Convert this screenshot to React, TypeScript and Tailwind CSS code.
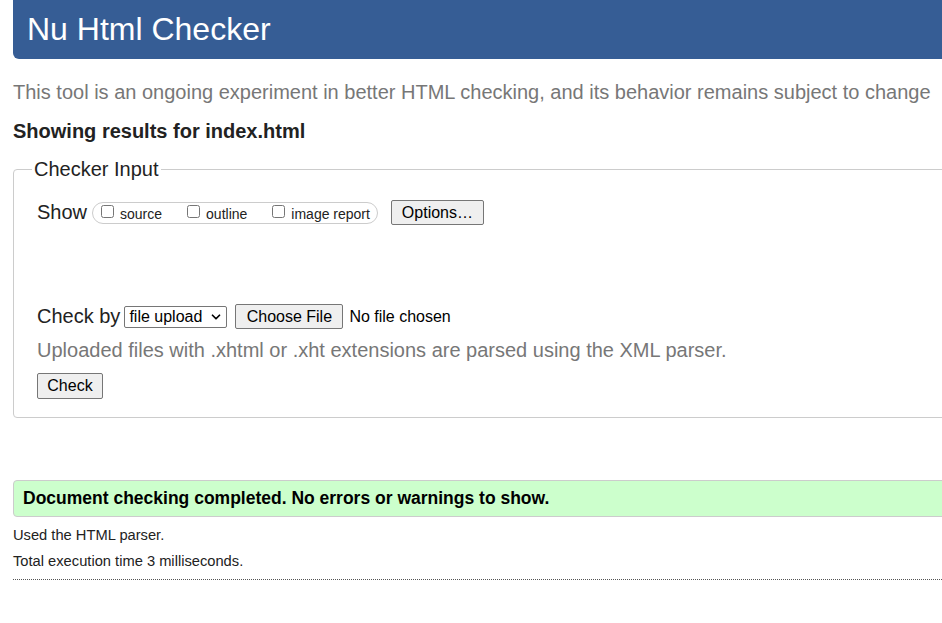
import { ChevronDown } from "lucide-react";

const Checkbox = ({ label }: { label: string }) => (
  <label className="flex items-center mr-[25px] last:mr-[7px]">
    <input type="checkbox" className="w-[13px] h-[13px] m-0 mr-[6px] -translate-y-[1px]" />
    <span className="text-[14px] leading-[16px] translate-y-[1px]">{label}</span>
  </label>
);

const Button = ({ children, className }: { children: React.ReactNode; className: string }) => (
  <button
    type="button"
    className={
      "flex items-center justify-center bg-[#efefef] border border-[#767676] rounded-[2px] text-[16px] text-black " +
      className
    }
  >
    {children}
  </button>
);

export default function App() {
  return (
    <div
      className="w-[942px] h-[623px] overflow-hidden bg-white text-[#222]"
      style={{ fontFamily: '"Liberation Sans", Arial, sans-serif' }}
    >
      <div className="w-[1000px] pl-[13px]">
        {/* header */}
        <div className="h-[59px] bg-[#365d95] rounded-b-[6px] flex items-center pl-[14px]">
          <h1 className="text-[32px] leading-[37px] text-white font-normal">Nu Html Checker</h1>
        </div>

        <p className="mt-[22px] text-[20px] leading-[23px] text-[#777]">
          This tool is an ongoing experiment in better HTML checking, and its behavior remains subject to change
        </p>

        <p className="mt-[16px] text-[20px] leading-[23px] font-bold">Showing results for index.html</p>

        {/* checker input */}
        <fieldset className="mt-[15px] border border-[#ccc] rounded-[4px] px-[18px] pb-[18px]">
          <legend className="px-[2px] text-[20px] leading-[23px]">Checker Input</legend>

          <div className="mt-[19px] ml-[5px] flex items-center h-[25px]">
            <span className="text-[20px] leading-[23px] mr-[5px]">Show</span>
            <div className="flex items-center h-[22px] border border-[#ccc] rounded-full pl-[8px]">
              <Checkbox label="source" />
              <Checkbox label="outline" />
              <Checkbox label="image report" />
            </div>
            <Button className="ml-[13px] w-[93px] h-[25px]">Options…</Button>
          </div>

          <div className="mt-[79px] ml-[5px] flex items-center h-[25px]">
            <span className="text-[20px] leading-[23px] mr-[4px]">Check by</span>
            <div className="flex items-center justify-between w-[103px] h-[22px] border border-[#767676] rounded-[2px] pl-[4px] pr-[3px] text-[16px] text-black">
              <span>file upload</span>
              <ChevronDown size={14} strokeWidth={3} />
            </div>
            <Button className="ml-[8px] w-[108px] h-[25px]">Choose File</Button>
            <span className="ml-[6px] text-[16px] text-black">No file chosen</span>
          </div>

          <p className="mt-[10px] ml-[5px] text-[20px] leading-[23px] text-[#777]">
            Uploaded files with .xhtml or .xht extensions are parsed using the XML parser.
          </p>

          <Button className="mt-[11px] ml-[5px] w-[66px] h-[26px]">Check</Button>
        </fieldset>

        {/* results */}
        <div className="mt-[62px] h-[37px] flex items-center bg-[#ccffcc] border border-[#ccc] rounded-l-[4px] pl-[9px]">
          <p className="text-[17.5px] font-bold text-black">Document checking completed. No errors or warnings to show.</p>
        </div>

        <p className="mt-[10px] text-[14.7px] leading-[17px]">Used the HTML parser.</p>
        <p className="mt-[9px] text-[14.7px] leading-[17px]">Total execution time 3 milliseconds.</p>

        <div className="mt-[9px] border-t border-dotted border-[#555]" />
      </div>
    </div>
  );
}
